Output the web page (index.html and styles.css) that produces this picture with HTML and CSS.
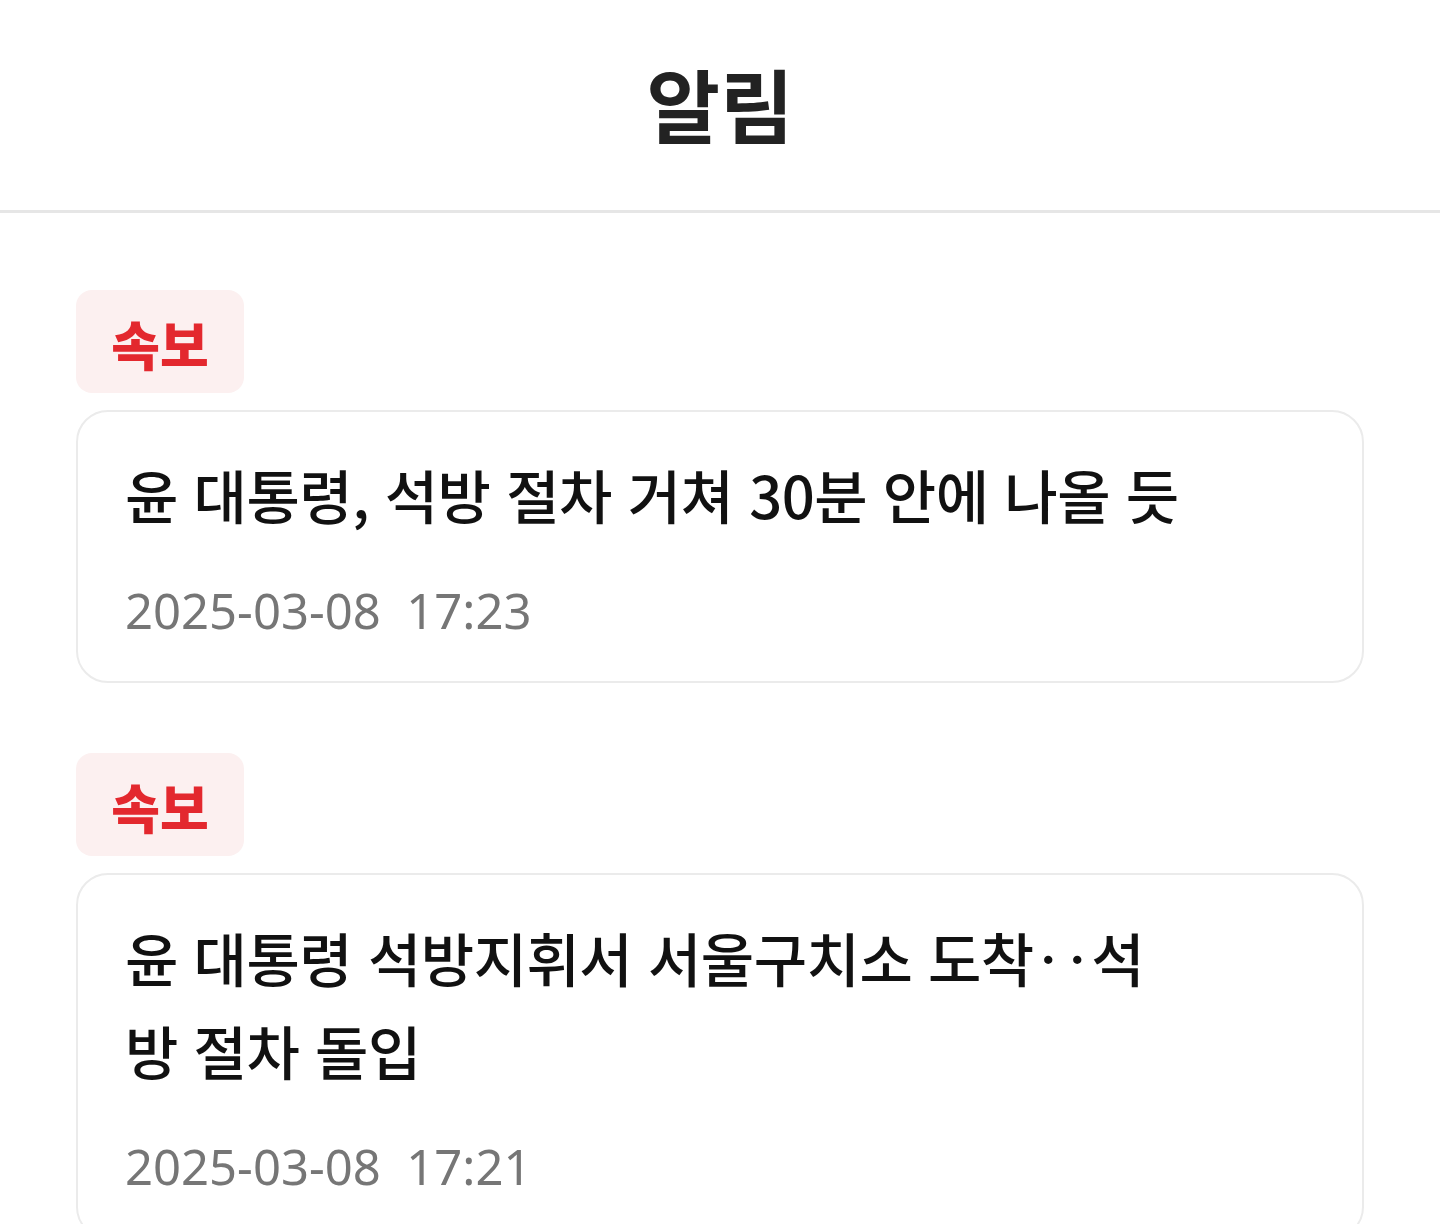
FILE: index.html
```html
<!DOCTYPE html>
<html lang="ko">
<head>
    <meta charset="UTF-8">
    <meta name="viewport" content="width=device-width, initial-scale=1.0">
    <title>알림</title>
    <link rel="stylesheet" href="styles.css">
</head>
<body>
    <header class="header">
        <h1 class="title">알림</h1>
    </header>

    <main class="list">
        <section class="notice">
            <span class="badge">속보</span>
            <div class="card">
                <p class="headline">윤 대통령, 석방 절차 거쳐 30분 안에 나올 듯</p>
                <p class="date">2025-03-08&nbsp;&nbsp;17:23</p>
            </div>
        </section>

        <section class="notice">
            <span class="badge">속보</span>
            <div class="card">
                <p class="headline">윤 대통령 석방지휘서 서울구치소 도착‥석방 절차 돌입</p>
                <p class="date">2025-03-08&nbsp;&nbsp;17:21</p>
            </div>
        </section>
    </main>
</body>
</html>
```

FILE: styles.css
```css
* {
    margin: 0;
    padding: 0;
    box-sizing: border-box;
}

body {
    background-color: #fff;
    font-family: "Noto Sans CJK KR", "Noto Sans", sans-serif;
    color: #111;
}

.header {
    height: 213px;
    display: flex;
    justify-content: center;
    align-items: center;
    border-bottom: 3px solid #e6e6e6;
}

.title {
    font-size: 80px;
    font-weight: 700;
    color: #222;
    padding-bottom: 6px;
}

.list {
    padding: 0 76px;
}

.notice {
    margin-top: 77px;
}

.notice + .notice {
    margin-top: 70px;
}

.badge {
    display: flex;
    align-items: center;
    justify-content: center;
    width: 168px;
    height: 103px;
    border-radius: 16px;
    background-color: #fcf0f0;
    color: #e3282e;
    font-size: 53px;
    font-weight: 900;
    padding-top: 3px;
}

.card {
    margin-top: 17px;
    border: 2px solid #ebebeb;
    border-radius: 32px;
    padding: 36px 170px 36px 47px;
}

.headline {
    font-size: 58px;
    line-height: 93px;
    font-weight: 500;
    word-break: break-all;
    letter-spacing: -0.5px;
}

.date {
    margin-top: 34px;
    font-family: "Noto Sans", sans-serif;
    font-size: 49px;
    line-height: 70px;
    color: #767676;
}
```
